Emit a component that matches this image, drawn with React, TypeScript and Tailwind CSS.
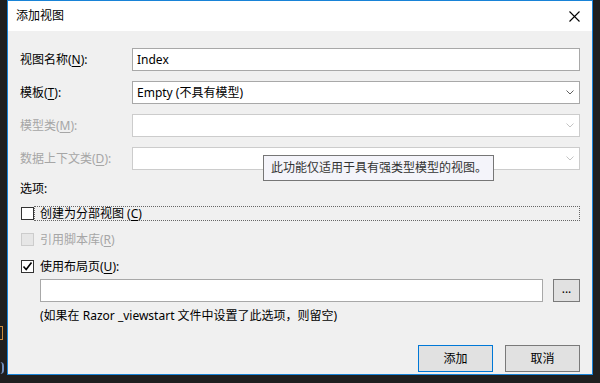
import type { ReactNode } from 'react';

const font = "font-['Noto_Sans','Noto_Sans_CJK_SC',sans-serif]";

function Key({ children }: { children: ReactNode }) {
  return <span className="underline underline-offset-2">{children}</span>;
}

function Chevron({ disabled }: { disabled?: boolean }) {
  return (
    <svg width="8" height="5" viewBox="0 0 8 5" className="mr-[5px]">
      <path d="M0.5 0.5 L4 4 L7.5 0.5" fill="none" stroke={disabled ? '#c4c4c4' : '#606060'} strokeWidth="1" />
    </svg>
  );
}

function FieldRow({
  label,
  disabled,
  value,
  select,
}: {
  label: ReactNode;
  disabled?: boolean;
  value?: string;
  select?: boolean;
}) {
  return (
    <div className="flex h-[23px] items-center">
      <div className={`w-[112px] text-[12px] ${disabled ? 'text-[#a6a6a6]' : 'text-black'}`}>{label}</div>
      <div
        className={`flex h-[23px] w-[448px] items-center justify-between border bg-white pl-[4px] text-[12px] ${
          disabled ? 'border-[#cccccc]' : 'border-[#a8a8a8]'
        }`}
      >
        <span>{value}</span>
        {select && <Chevron disabled={disabled} />}
      </div>
    </div>
  );
}

export default function App() {
  return (
    <div className={`flex h-[383px] w-[600px] bg-[#1f1f1f] ${font}`}>
      <div className="flex w-[7px] flex-col overflow-hidden">
        <div className="mt-[326px] ml-[-4px] h-[14px] w-[7px] border border-[#c98a3c]" />
        <div className="mt-[22px] h-[12px] w-[4px] rounded-r-full border-r-2 border-[#6f8fbf]" />
      </div>
      <div className="flex h-[375px] w-[586px] flex-col border border-[#1883d7] bg-[#f0f0f0]">
        {/* title bar */}
        <div className="flex h-[30px] items-center justify-between bg-white pl-[8px] pr-[12px]">
          <span className="text-[12px] text-black">添加视图</span>
          <svg width="11" height="11" viewBox="0 0 11 11">
            <path d="M0.5 0.5 L10.5 10.5 M10.5 0.5 L0.5 10.5" stroke="#000" strokeWidth="1.1" />
          </svg>
        </div>

        {/* body */}
        <div className="relative flex flex-1 flex-col pl-[12px] pt-[17px]">
          <div className="flex flex-col gap-[10px]">
            <FieldRow label={<>视图名称(<Key>N</Key>):</>} value="Index" />
            <FieldRow label={<>模板(<Key>T</Key>):</>} value="Empty (不具有模型)" select />
            <FieldRow label={<>模型类(<Key>M</Key>):</>} disabled select />
            <FieldRow label={<>数据上下文类(<Key>D</Key>):</>} disabled select />
          </div>

          <div className="absolute left-[255px] top-[124px] flex h-[26px] w-[231px] items-center border border-[#767676] bg-[#f4f4fa] pl-[7px] text-[12px] text-[#333]">
            此功能仅适用于具有强类型模型的视图。
          </div>

          <div className="mt-[9px] flex h-[20px] items-center text-[12px] text-black">选项:</div>

          <div className="mt-[7px] flex h-[15px] items-center">
            <div className="ml-[1px] h-[13px] w-[13px] border border-[#333] bg-white" />
            <div className="flex h-[15px] w-[546px] items-center border border-dotted border-[#666] pl-[5px] text-[12px] text-black">
              创建为分部视图 (<Key>C</Key>)
            </div>
          </div>

          <div className="mt-[11px] flex h-[15px] items-center">
            <div className="ml-[1px] h-[13px] w-[13px] border border-[#cccccc] bg-[#e6e6e6]" />
            <div className="pl-[6px] text-[12px] text-[#a6a6a6]">
              引用脚本库(<Key>R</Key>)
            </div>
          </div>

          <div className="mt-[12px] flex h-[15px] items-center">
            <div className="ml-[1px] flex h-[13px] w-[13px] items-center justify-center border border-[#333] bg-white">
              <svg width="11" height="11" viewBox="0 0 11 11">
                <path d="M1.5 5.5 L4.2 8.5 L9.5 1.5" fill="none" stroke="#000" strokeWidth="1.6" />
              </svg>
            </div>
            <div className="pl-[6px] text-[12px] text-black">
              使用布局页(<Key>U</Key>):
            </div>
          </div>

          <div className="ml-[20px] mt-[5px] flex h-[23px] items-center gap-[10px]">
            <div className="h-[23px] w-[503px] border border-[#a8a8a8] bg-white" />
            <div className="flex h-[23px] w-[27px] items-center justify-center border border-[#7a7a7a] bg-[#e1e1e1] pb-[4px] text-[12px] text-black">
              ...
            </div>
          </div>

          <div className="ml-[20px] mt-[4px] flex h-[20px] items-center text-[12px] text-black">
            (如果在 Razor _viewstart 文件中设置了此选项，则留空)
          </div>

          <div className="mt-[19px] flex justify-end gap-[12px] pr-[12px]">
            <div className="flex h-[27px] w-[75px] items-center justify-center border border-[#0078d7] bg-[#e1e1e1] text-[12px] text-black">
              添加
            </div>
            <div className="flex h-[27px] w-[75px] items-center justify-center border border-[#7a7a7a] bg-[#e1e1e1] text-[12px] text-black">
              取消
            </div>
          </div>
        </div>
      </div>
    </div>
  );
}
